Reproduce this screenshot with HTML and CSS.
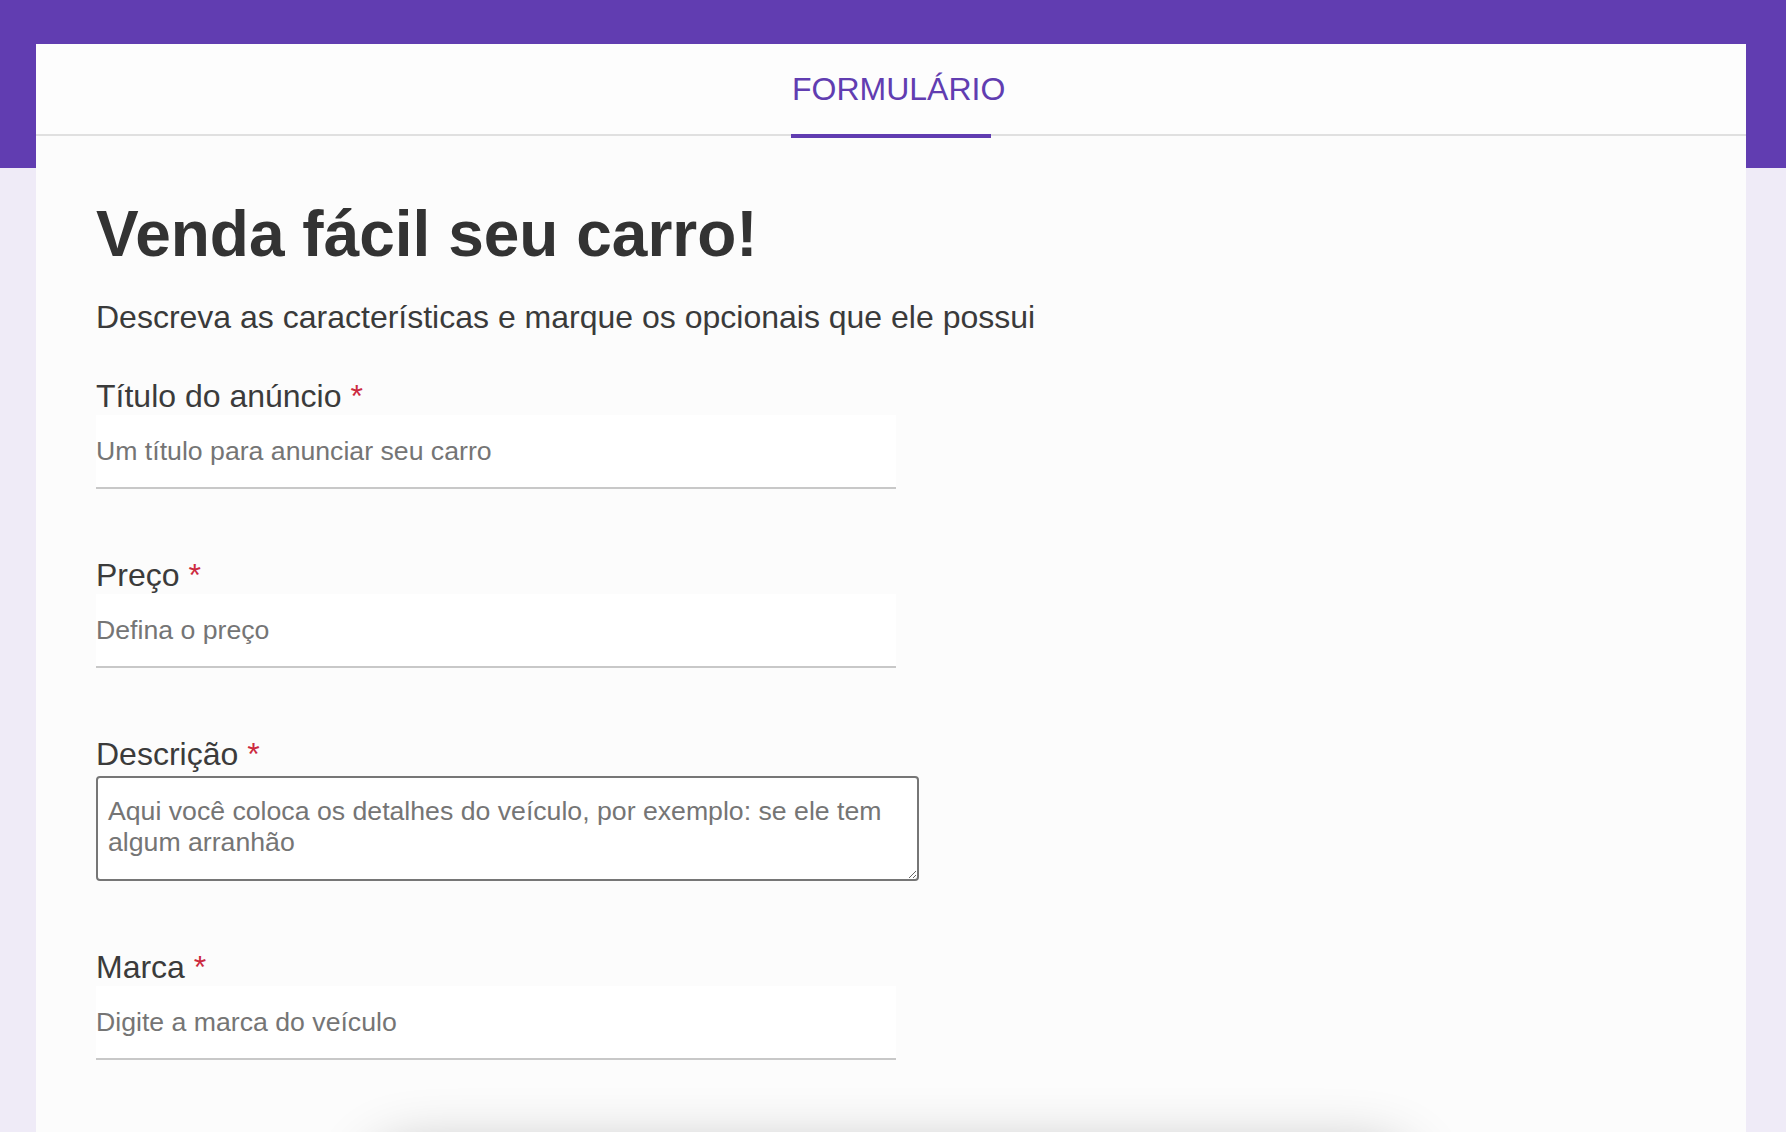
FILE: index.html
```html
<!DOCTYPE html>
<html lang="pt-BR">
<head>
<meta charset="utf-8">
<title>Venda fácil seu carro!</title>
<link rel="stylesheet" href="styles.css">
</head>
<body>
<main class="card">
  <nav class="tabs">
    <div class="tab">FORMULÁRIO</div>
  </nav>
  <form class="form">
    <h1 class="title">Venda fácil seu carro!</h1>
    <p class="subtitle">Descreva as características e marque os opcionais que ele possui</p>

    <div class="field">
      <label class="label" for="titulo">Título do anúncio <span class="req">*</span></label>
      <input class="input" id="titulo" type="text" placeholder="Um título para anunciar seu carro">
    </div>

    <div class="field">
      <label class="label" for="preco">Preço <span class="req">*</span></label>
      <input class="input" id="preco" type="text" placeholder="Defina o preço">
    </div>

    <div class="field">
      <label class="label" for="descricao">Descrição <span class="req">*</span></label>
      <textarea class="textarea" id="descricao" placeholder="Aqui você coloca os detalhes do veículo, por exemplo: se ele tem algum arranhão"></textarea>
    </div>

    <div class="field">
      <label class="label" for="marca">Marca <span class="req">*</span></label>
      <input class="input" id="marca" type="text" placeholder="Digite a marca do veículo">
    </div>

    <div class="submit-area"></div>
  </form>
</main>
</body>
</html>
```

FILE: styles.css
```css
html, body {
  margin: 0;
  padding: 0;
}

body {
  background: linear-gradient(#613db1 0, #613db1 168px, #efebf7 168px);
  background-repeat: no-repeat;
  background-color: #efebf7;
  font-family: "Liberation Sans", Arial, sans-serif;
}

.card {
  margin: 44px 40px 0 36px;
  background: #fcfcfc;
  min-height: 1200px;
}

.tabs {
  display: flex;
  justify-content: center;
  height: 90px;
  border-bottom: 2px solid #e0e0e0;
  background: #fdfdfd;
}

.tab {
  width: 200px;
  height: 94px;
  box-sizing: border-box;
  padding: 27px 0 0 1px;
  border-bottom: 4px solid #613db1;
  color: #613db1;
  font-size: 32px;
  line-height: normal;
  white-space: nowrap;
}

.form {
  padding: 61px 60px 0 60px;
}

.title {
  margin: 0;
  font-size: 64px;
  font-weight: 700;
  line-height: normal;
  color: #333333;
}

.subtitle {
  margin: 28px 0 42px;
  font-size: 32px;
  line-height: normal;
  color: #3a3a3a;
}

.field + .field {
  margin-top: 68px;
}

.label {
  display: block;
  font-size: 32px;
  line-height: normal;
  color: #3b3b3b;
}

.req {
  color: #cc2a3f;
}

.input {
  display: block;
  box-sizing: border-box;
  width: 800px;
  height: 74px;
  margin: 0;
  padding: 0;
  border: 0;
  border-bottom: 2px solid #c8c8c8;
  background: #ffffff;
  font-family: inherit;
  font-size: 26.67px;
  color: #333333;
  outline: none;
}

.input::placeholder,
.textarea::placeholder {
  color: #757575;
  opacity: 1;
}

.textarea {
  display: block;
  box-sizing: border-box;
  width: 823px;
  height: 105px;
  margin: 3px 0 0;
  padding: 18px 10px;
  border: 2px solid #767676;
  border-radius: 4px;
  background: #ffffff;
  font-family: inherit;
  font-size: 26.67px;
  line-height: normal;
  color: #333333;
  outline: none;
}

.submit-area {
  width: 1040px;
  height: 80px;
  margin: 91px auto 0;
  border-radius: 40px;
  background: #fcfcfc;
  box-shadow: 0 0 60px rgba(0, 0, 0, 0.3);
}
```
